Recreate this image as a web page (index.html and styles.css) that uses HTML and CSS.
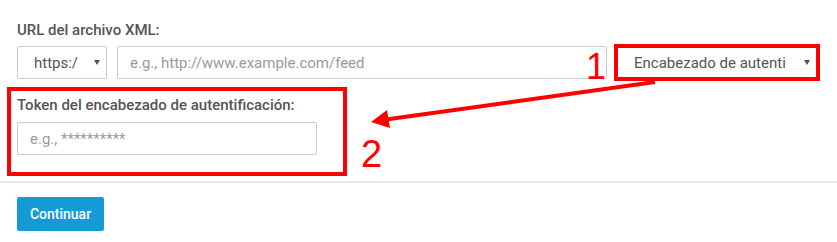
FILE: index.html
```html
<!DOCTYPE html>
<html lang="es">
<head>
<meta charset="utf-8">
<title>URL del archivo XML</title>
<link rel="stylesheet" href="styles.css">
</head>
<body>
<div class="page">
  <form class="form">
    <div class="field-label">URL del archivo XML:</div>
    <div class="url-row">
      <div class="select select-proto">
        <span class="select-text">https:/</span>
        <span class="caret"></span>
      </div>
      <div class="input input-url">e.g., http://www.example.com/feed</div>
      <div class="mark-box">
        <div class="select select-auth">
          <span class="select-text">Encabezado de autenti</span>
          <span class="caret"></span>
        </div>
      </div>
    </div>
    <div class="token-box">
      <div class="field-label">Token del encabezado de autentificación:</div>
      <div class="input input-token">e.g., **********</div>
    </div>
  </form>
  <hr class="divider">
  <div class="actions">
    <button type="button" class="btn-primary">Continuar</button>
  </div>
  <svg class="annotations" width="837" height="242" viewBox="0 0 837 242">
    <line x1="655" y1="82" x2="386" y2="119.5" stroke="#ff0000" stroke-width="4"/>
    <polygon points="371,122 387,110 390,128" fill="#ff0000"/>
    <text x="586" y="79" class="num">1</text>
    <text x="361" y="167" class="num num2">2</text>
  </svg>
</div>
</body>
</html>
```
FILE: styles.css
```css
* { box-sizing: border-box; }

html, body {
  margin: 0;
  padding: 0;
  background: #ffffff;
}

body {
  font-family: Roboto, "Liberation Sans", Arial, sans-serif;
  font-size: 15px;
  line-height: 20px;
  color: #555555;
}

.page {
  position: relative;
  width: 837px;
  height: 242px;
  padding-top: 20px;
}

.form {
  margin: 0;
  padding: 0 0 0 17px;
}

.field-label {
  font-weight: 500;
  color: #555555;
  height: 20px;
  white-space: nowrap;
}

.url-row {
  display: flex;
  align-items: center;
  margin-top: 4px;
  height: 37px;
}

.select {
  display: flex;
  align-items: center;
  justify-content: space-between;
  height: 33px;
  background: #fff;
  color: #555555;
  white-space: nowrap;
}

.select-proto {
  width: 90px;
  border: 1px solid #cccccc;
  border-radius: 2px;
  padding: 0 6px 0 16px;
}

.caret {
  width: 0;
  height: 0;
  border-left: 3.5px solid transparent;
  border-right: 3.5px solid transparent;
  border-top: 5px solid #555555;
  flex: none;
}

.input {
  height: 33px;
  border: 1px solid #cccccc;
  border-radius: 2px;
  padding: 0 12px;
  display: flex;
  align-items: center;
  color: #9a9a9a;
  white-space: nowrap;
}

.input-url {
  width: 490px;
  margin-left: 10px;
}

.mark-box {
  margin-left: 7px;
  width: 206px;
  height: 37px;
  border: 4px solid #ff0000;
  display: flex;
  align-items: center;
}

.select-auth {
  width: 198px;
  height: 29px;
  padding: 0 6px 0 16px;
}

.token-box {
  margin-top: 6px;
  margin-left: -10px;
  width: 340px;
  height: 89px;
  border: 4px solid #ff0000;
  padding: 4px 0 0 6px;
}

.input-token {
  margin-top: 7px;
  width: 300px;
}

.divider {
  margin: 5px 0 0 0;
  border: 0;
  border-top: 2px solid #e8e8e8;
  height: 0;
}

.actions {
  padding: 14px 0 0 17px;
}

.btn-primary {
  font-family: Roboto, "Liberation Sans", Arial, sans-serif;
  font-size: 14px;
  font-weight: 500;
  color: #ffffff;
  background: #149bd7;
  border: 0;
  border-radius: 2px;
  width: 87px;
  height: 34px;
  padding: 0;
  cursor: pointer;
}

.annotations {
  position: absolute;
  left: 0;
  top: 0;
  pointer-events: none;
}

.num {
  font-family: "Liberation Sans", Arial, sans-serif;
  font-size: 36px;
  fill: #ff0000;
}

.num2 {
  font-size: 38px;
}
```
